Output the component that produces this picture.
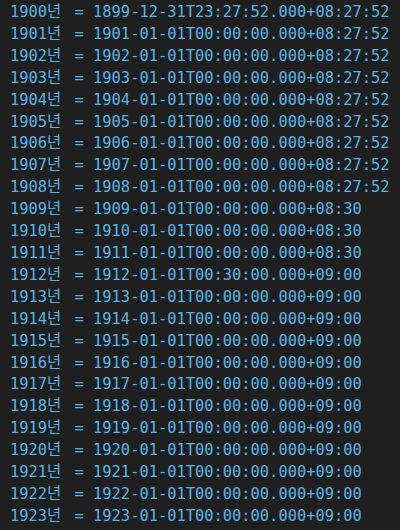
const rows: [number, string][] = [
  [1900, "1899-12-31T23:27:52.000+08:27:52"],
  [1901, "1901-01-01T00:00:00.000+08:27:52"],
  [1902, "1902-01-01T00:00:00.000+08:27:52"],
  [1903, "1903-01-01T00:00:00.000+08:27:52"],
  [1904, "1904-01-01T00:00:00.000+08:27:52"],
  [1905, "1905-01-01T00:00:00.000+08:27:52"],
  [1906, "1906-01-01T00:00:00.000+08:27:52"],
  [1907, "1907-01-01T00:00:00.000+08:27:52"],
  [1908, "1908-01-01T00:00:00.000+08:27:52"],
  [1909, "1909-01-01T00:00:00.000+08:30"],
  [1910, "1910-01-01T00:00:00.000+08:30"],
  [1911, "1911-01-01T00:00:00.000+08:30"],
  [1912, "1912-01-01T00:30:00.000+09:00"],
  [1913, "1913-01-01T00:00:00.000+09:00"],
  [1914, "1914-01-01T00:00:00.000+09:00"],
  [1915, "1915-01-01T00:00:00.000+09:00"],
  [1916, "1916-01-01T00:00:00.000+09:00"],
  [1917, "1917-01-01T00:00:00.000+09:00"],
  [1918, "1918-01-01T00:00:00.000+09:00"],
  [1919, "1919-01-01T00:00:00.000+09:00"],
  [1920, "1920-01-01T00:00:00.000+09:00"],
  [1921, "1921-01-01T00:00:00.000+09:00"],
  [1922, "1922-01-01T00:00:00.000+09:00"],
  [1923, "1923-01-01T00:00:00.000+09:00"],
];

export default function App() {
  return (
    <div className="w-[400px] h-[530px] overflow-hidden bg-[#1f1f1f] pl-[10px] pt-[2px]">
      {/* console output */}
      <div className="font-['DejaVu_Sans_Mono','Noto_Sans_CJK_KR',monospace] text-[15.4px] leading-[21.9px] text-[#5cb5e6] whitespace-pre">
        {rows.map(([year, iso]) => (
          <div key={year}>
            {year}
            <span className="pr-[4px]">년</span> = {iso}
          </div>
        ))}
      </div>
    </div>
  );
}
